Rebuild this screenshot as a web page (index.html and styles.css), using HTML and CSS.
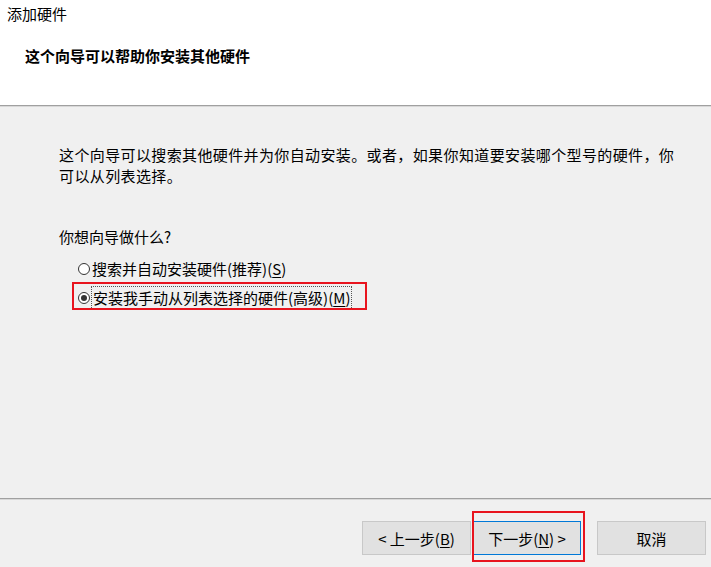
FILE: index.html
```html
<!DOCTYPE html>
<html lang="zh-CN">
<head>
<meta charset="utf-8">
<title>添加硬件</title>
<link rel="stylesheet" href="styles.css">
</head>
<body>
<div class="window">
  <header class="header">
    <div class="title">添加硬件</div>
    <h1 class="heading">这个向导可以帮助你安装其他硬件</h1>
  </header>
  <main class="content">
    <p class="intro">这个向导可以搜索其他硬件并为你自动安装。或者，如果你知道要安装哪个型号的硬件，你<br>可以从列表选择。</p>
    <p class="question">你想向导做什么?</p>
    <div class="options">
      <label class="option">
        <span class="radio"></span>
        <span class="label-text">搜索并自动安装硬件(推荐)(<u>S</u>)</span>
      </label>
      <label class="option selected">
        <span class="radio checked"></span>
        <span class="label-text focus">安装我手动从列表选择的硬件(高级)(<u>M</u>)</span>
        <span class="mark mark-option"></span>
      </label>
    </div>
  </main>
  <footer class="footer">
    <div class="btn-pair">
      <button class="btn">&lt; 上一步(<u>B</u>)</button>
      <button class="btn btn-default">下一步(<u>N</u>) &gt;<span class="mark mark-next"></span></button>
    </div>
    <button class="btn">取消</button>
  </footer>
</div>
</body>
</html>
```

FILE: styles.css
```css
* { box-sizing: border-box; }
html, body {
  margin: 0;
  padding: 0;
  width: 711px;
  height: 567px;
  overflow: hidden;
  font-family: "Noto Sans CJK SC", "Noto Sans", "Liberation Sans", sans-serif;
  color: #000;
}
.window {
  width: 711px;
  height: 567px;
  display: flex;
  flex-direction: column;
  background: #f0f0f0;
}
.header {
  height: 106px;
  background: #fff;
  border-bottom: 1px solid #a0a0a0;
  box-shadow: 0 1px 0 #d8d8d8;
  padding: 3px 0 0 7px;
  flex: none;
}
.title {
  font-size: 15px;
  line-height: 22px;
}
.heading {
  margin: 20px 0 0 18px;
  font-size: 15px;
  font-weight: bold;
  line-height: 22px;
}
.content {
  flex: 1;
  padding: 38px 0 0 59px;
  border-bottom: 1px solid #a0a0a0;
  box-shadow: 0 1px 0 #d8d8d8;
}
.intro {
  margin: 0;
  font-size: 15px;
  line-height: 21px;
  letter-spacing: 0.38px;
}
.question {
  margin: 40px 0 0;
  font-size: 15px;
  line-height: 22px;
}
.options {
  margin: 10px 0 0 19px;
  display: flex;
  flex-direction: column;
  gap: 7px;
}
.option {
  position: relative;
  display: flex;
  align-items: center;
  font-size: 15px;
  line-height: 22px;
}
.radio {
  width: 12px;
  height: 12px;
  border: 1px solid #333;
  border-radius: 50%;
  background: #fff;
  margin-right: 2px;
  display: inline-flex;
  align-items: center;
  justify-content: center;
  flex: none;
}
.radio.checked::after {
  content: "";
  width: 6px;
  height: 6px;
  border-radius: 50%;
  background: #333;
}
.label-text u { text-decoration: underline; text-underline-offset: 2px; }
.focus {
  outline: 1px dotted #555;
  outline-offset: 0;
  padding: 0 1px;
}
.mark {
  position: absolute;
  border: 2px solid #e8141e;
  pointer-events: none;
}
.mark-option {
  left: -6px;
  top: -5px;
  width: 295px;
  height: 28px;
}
.footer {
  flex: none;
  height: 68px;
  display: flex;
  align-items: flex-start;
  padding: 22px 0 0 362px;
  gap: 16px;
}
.btn-pair {
  display: flex;
  gap: 2px;
}
.btn {
  position: relative;
  width: 109px;
  height: 34px;
  background: #e1e1e1;
  border: 1px solid #c8c8c8;
  font-family: inherit;
  font-size: 15px;
  color: #000;
  padding: 0;
}
.btn-default {
  width: 108px;
  border: 1px solid #0078d7;
}
.btn u { text-decoration: underline; text-underline-offset: 2px; }
.mark-next {
  left: -2px;
  top: -11px;
  width: 113px;
  height: 51px;
}
```
